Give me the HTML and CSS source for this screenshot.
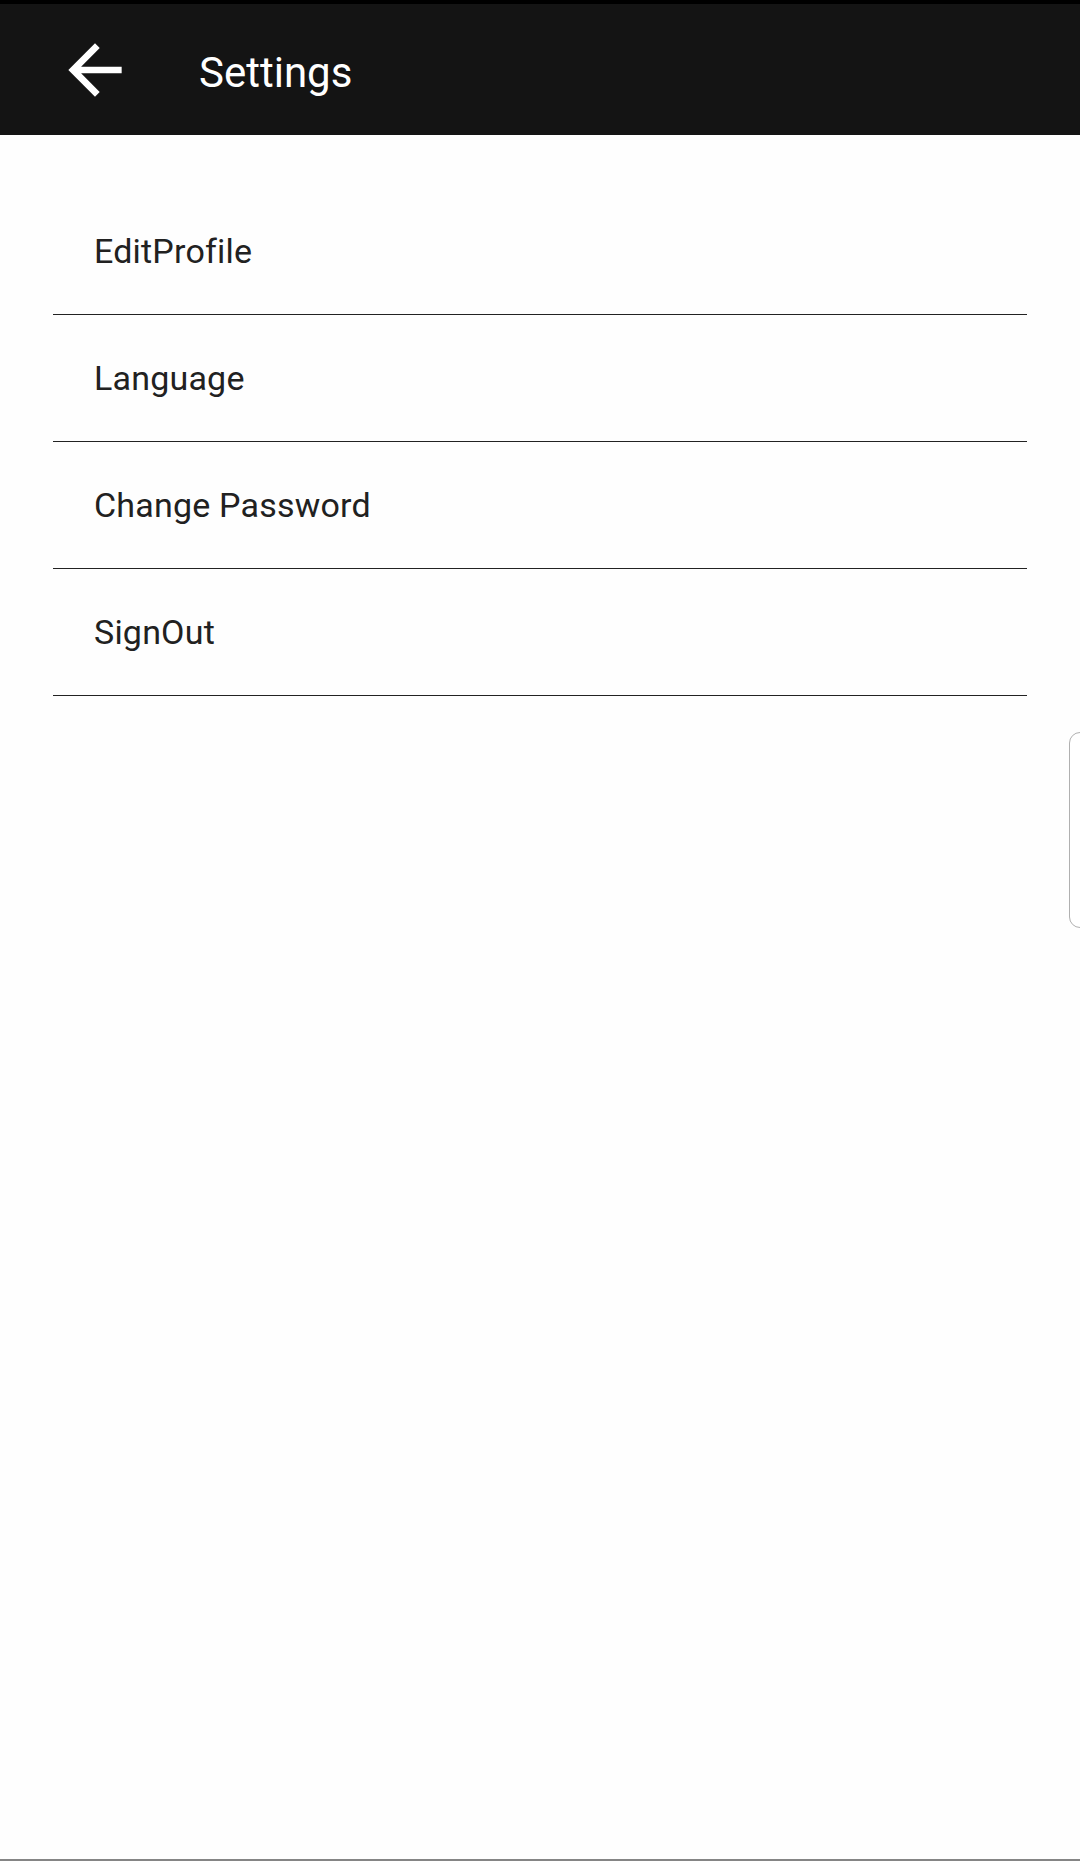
FILE: index.html
```html
<!DOCTYPE html>
<html lang="en">
<head>
<meta charset="utf-8">
<title>Settings</title>
<link rel="stylesheet" href="styles.css">
</head>
<body>
<div class="page">
  <header class="appbar">
    <svg class="back" viewBox="0 0 24 24" width="80" height="80" aria-hidden="true">
      <path d="M20 11H7.83l5.59-5.59L12 4l-8 8 8 8 1.41-1.41L7.83 13H20v-2z" fill="#ffffff"/>
    </svg>
    <h1 class="title">Settings</h1>
  </header>
  <ul class="menu">
    <li class="item">EditProfile</li>
    <li class="item">Language</li>
    <li class="item">Change Password</li>
    <li class="item">SignOut</li>
  </ul>
  <div class="edge-handle"></div>
</div>
</body>
</html>
```

FILE: styles.css
```css
html, body {
  margin: 0;
  padding: 0;
  background: #ffffff;
}

body {
  font-family: Roboto, "Noto Sans", "Liberation Sans", sans-serif;
}

.page {
  position: relative;
  width: 1080px;
  height: 1861px;
  box-sizing: border-box;
  border-bottom: 2px solid #858585;
  background: #fefefe;
  overflow: hidden;
}

.appbar {
  display: flex;
  align-items: center;
  height: 131px;
  border-top: 4px solid #000000;
  background: #141414;
  padding-left: 55px;
}

.back {
  display: block;
  flex: none;
}

.title {
  margin: 5px 0 0 64px;
  font-size: 42px;
  font-weight: 400;
  color: #ffffff;
}

.menu {
  list-style: none;
  margin: 53px 53px 0 53px;
  padding: 0;
}

.item {
  display: flex;
  align-items: center;
  height: 126px;
  padding-left: 41px;
  border-bottom: 1px solid #222222;
  font-size: 34px;
  letter-spacing: 0.2px;
  color: #212121;
}

.edge-handle {
  position: absolute;
  left: 1069px;
  top: 732px;
  width: 30px;
  height: 194px;
  border: 1.5px solid #b0b0b0;
  border-radius: 11px;
  background: #ffffff;
}
```
